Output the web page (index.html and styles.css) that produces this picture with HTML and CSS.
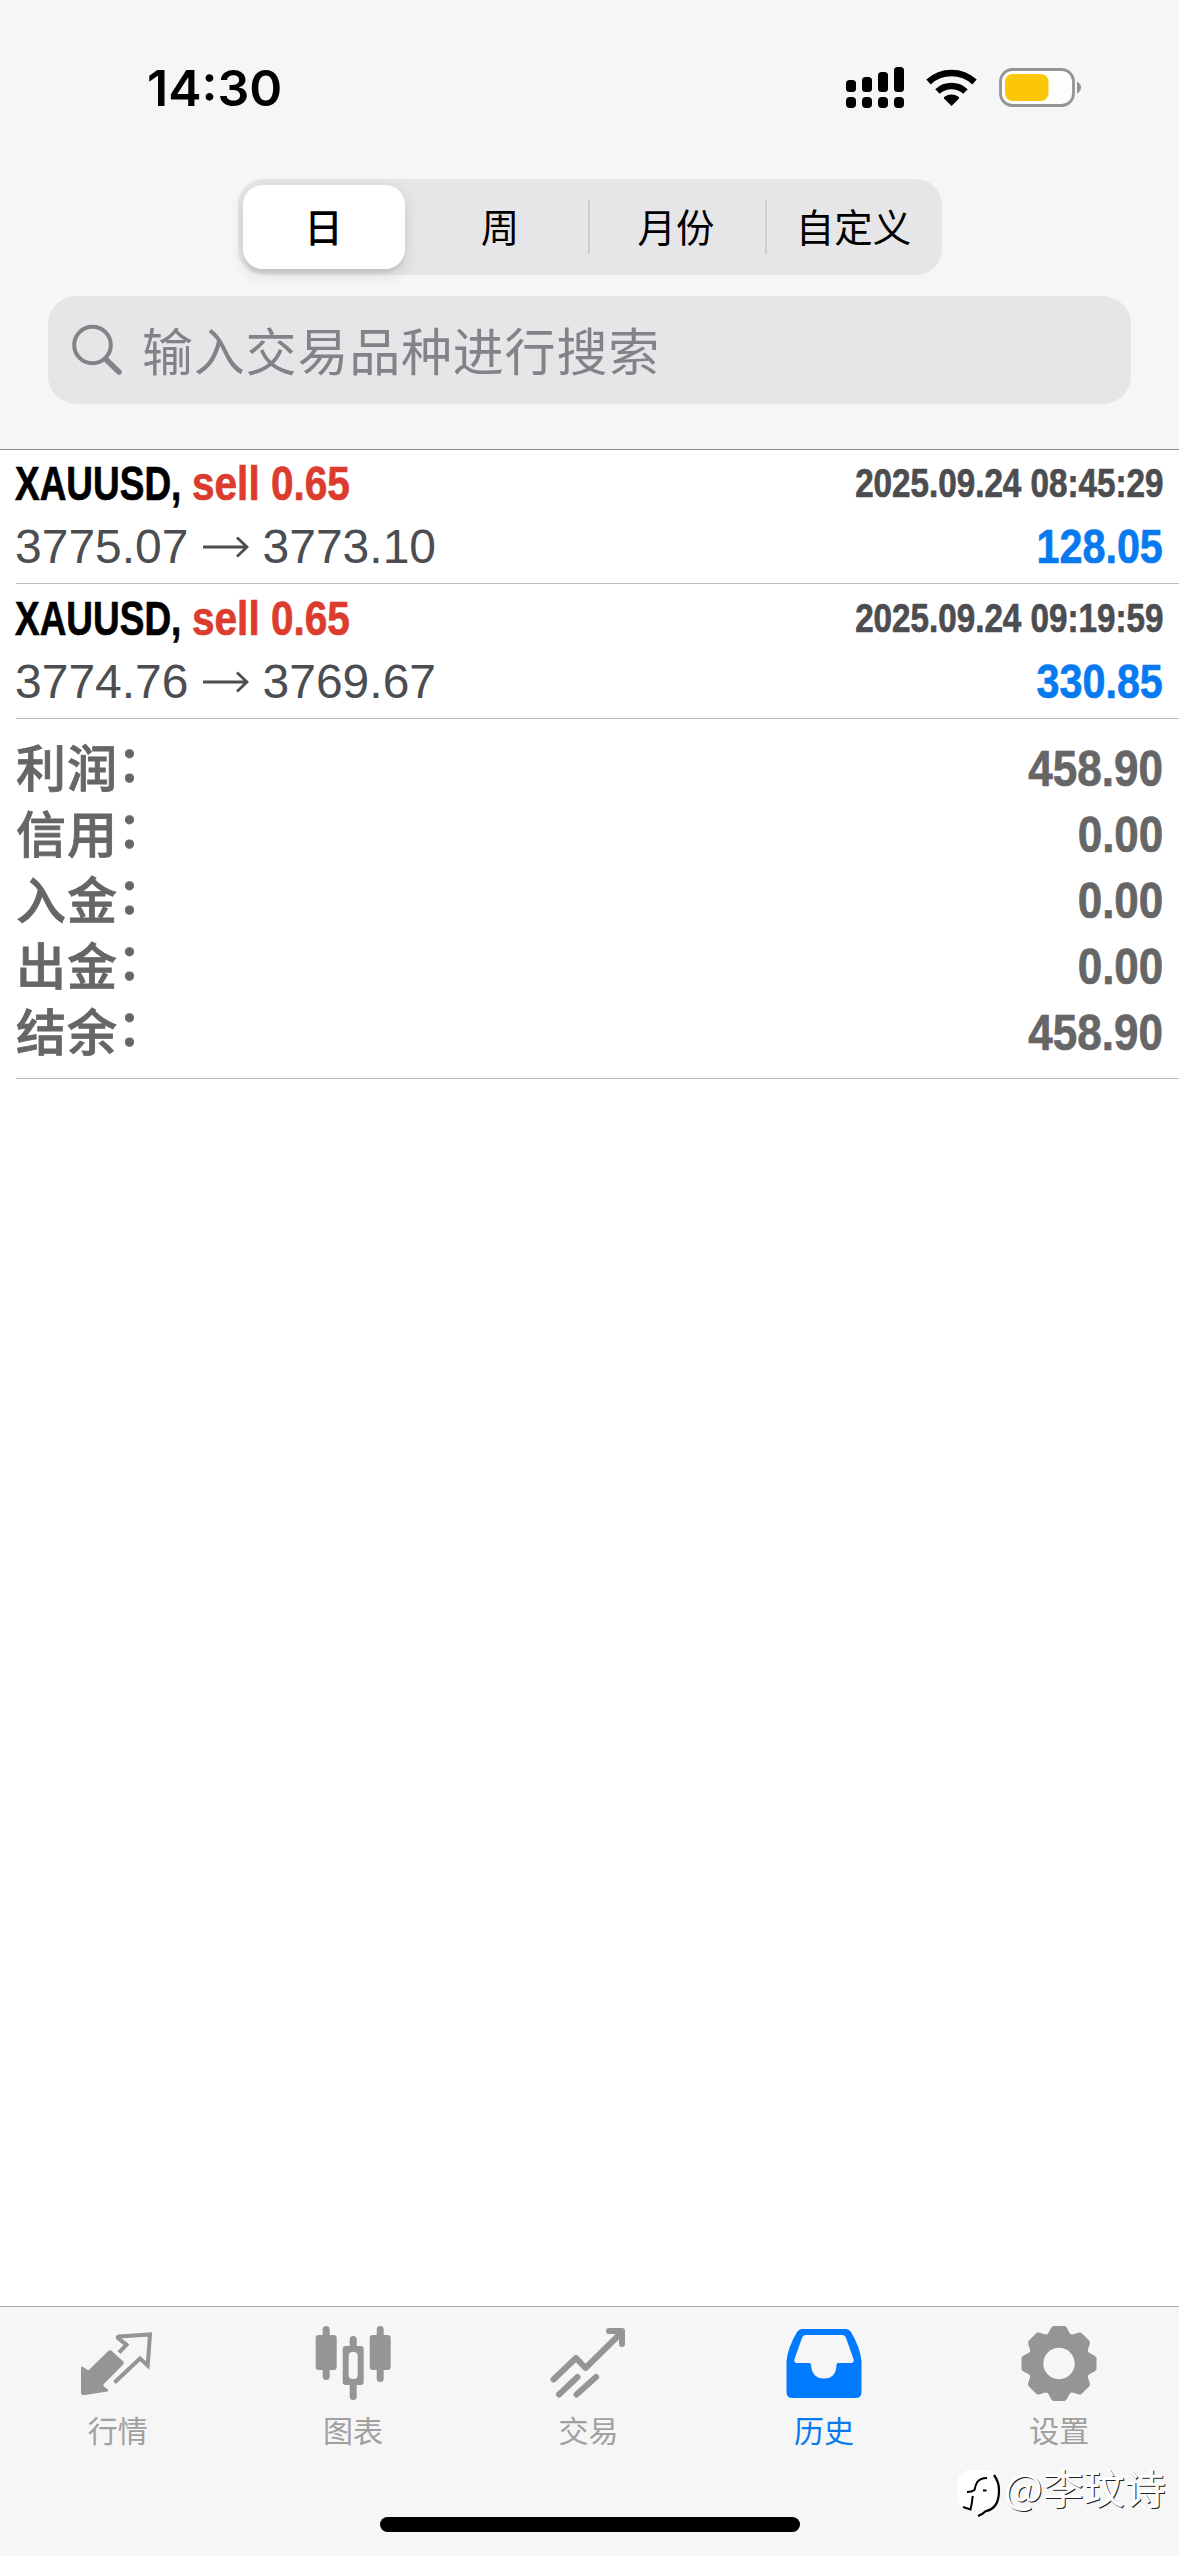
FILE: index.html
```html
<!DOCTYPE html>
<html lang="zh-CN">
<head>
<meta charset="utf-8">
<title>历史</title>
<link rel="stylesheet" href="styles.css">
</head>
<body>
<div class="app">
  <header class="top">
    <div class="status">
      <span class="clock">14:30</span>
      <svg class="status-icons" width="242" height="44" viewBox="0 0 242 44">
        <g fill="#000">
          <rect x="0" y="14" width="10" height="12" rx="3.5"/><rect x="16" y="11" width="10" height="15" rx="3.5"/><rect x="32" y="6" width="10" height="20" rx="3.5"/><rect x="48" y="1" width="10" height="25" rx="3.5"/>
          <rect x="0" y="31" width="10" height="11" rx="4"/><rect x="16" y="31" width="10" height="11" rx="4"/><rect x="32" y="31" width="10" height="11" rx="4"/><rect x="48" y="31" width="10" height="11" rx="4"/>
          <path d="M105.5 40 L98 32.5 Q97.500 31.500 98.500 30.800 A12 12 0 0 1 112.500 30.800 Q113.500 31.500 113 32.500Z"/>
        </g>
        <path d="M91.500 25.500A20.500 20.500 0 0 1 119.500 25.500M82.500 16A34 34 0 0 1 128.500 16" fill="none" stroke="#000" stroke-width="6.500"/>
        <rect x="154.500" y="3.500" width="73" height="36" rx="12" fill="#fdfdfb" stroke="#949494" stroke-width="2.800"/>
        <rect x="159" y="8" width="43.500" height="27" rx="7.500" fill="#fbc707"/>
        <path d="M231 15.500Q235 17.500 235 21.500Q235 25.500 231 27.500Z" fill="#949494"/>
      </svg>
    </div>
    <nav class="segments">
      <span class="segment selected">日</span>
      <span class="segment week">周</span>
      <span class="segment divided">月份</span>
      <span class="segment divided custom">自定义</span>
    </nav>
    <div class="search">
      <svg width="54" height="54" viewBox="0 0 54 54" fill="none" stroke="#838387" stroke-width="4"><circle cx="21.500" cy="22" r="18.300"/><path d="M34.500 36L48 49" stroke-width="5.500" stroke-linecap="round"/></svg>
      <span class="placeholder">输入交易品种进行搜索</span>
    </div>
  </header>
  <main class="history">
    <section class="deal">
      <div class="line"><span class="symbol"><b>XAUUSD,</b></span><b class="side">sell 0.65</b><b class="date">2025.09.24 08:45:29</b></div>
      <div class="line prices"><span>3775.07</span><svg class="arrow" width="46" height="22" viewBox="0 0 46 22"><path d="M0 11H44M34 1.500L44 11L34 20.500" fill="none" stroke="#4c4d50" stroke-width="2.800"/></svg><span>3773.10</span><b class="profit">128.05</b></div>
    </section>
    <section class="deal">
      <div class="line"><span class="symbol"><b>XAUUSD,</b></span><b class="side">sell 0.65</b><b class="date">2025.09.24 09:19:59</b></div>
      <div class="line prices"><span>3774.76</span><svg class="arrow" width="46" height="22" viewBox="0 0 46 22"><path d="M0 11H44M34 1.500L44 11L34 20.500" fill="none" stroke="#4c4d50" stroke-width="2.800"/></svg><span>3769.67</span><b class="profit">330.85</b></div>
    </section>
    <section class="summary">
      <div class="total"><span class="label">利润<i>：</i></span><b>458.90</b></div>
      <div class="total"><span class="label">信用<i>：</i></span><b>0.00</b></div>
      <div class="total"><span class="label">入金<i>：</i></span><b>0.00</b></div>
      <div class="total"><span class="label">出金<i>：</i></span><b>0.00</b></div>
      <div class="total"><span class="label">结余<i>：</i></span><b>458.90</b></div>
    </section>
  </main>
  <footer class="tabs">
    <a class="tab"><svg width="80" height="80" viewBox="0 0 80 80">
      <path d="M3 46Q3 43.500 5 45L10.300 48.500L30.500 28.800Q32 27.500 33.500 28.800L45.300 39.500Q46.500 41 45.300 42.500L25.300 62.500Q25 64.500 29.500 67Q31 68.500 29.500 69.500L7 73Q3 73.500 3 70.500Z" fill="#959595"/>
      <path d="M41 30.500L48.500 22.800L40 16.200Q39 14.800 41 14.500L72 12.500L69.700 43.500L62 36.500L36.500 60.500" fill="none" stroke="#959595" stroke-width="4"/>
    </svg><span>行情</span></a>
    <a class="tab"><svg width="80" height="80" viewBox="0 0 80 80" fill="#959595">
      <rect x="9.700" y="4" width="7" height="54" rx="3.500"/><rect x="2.700" y="13" width="21" height="35" rx="3"/>
      <rect x="63.700" y="4" width="7" height="56" rx="3.500"/><rect x="56.700" y="13" width="21" height="35" rx="3"/>
      <rect x="36.700" y="14" width="7" height="64" rx="3.500"/><rect x="29.700" y="24" width="21" height="39" rx="3"/><rect x="35.700" y="30" width="9" height="27" rx="4" fill="#f6f6f6"/>
    </svg><span>图表</span></a>
    <a class="tab"><svg width="80" height="80" viewBox="0 0 80 80" fill="none" stroke="#959595" stroke-width="6" stroke-linecap="round" stroke-linejoin="round">
      <path d="M5.500 57.500L28 36L37.500 46L73 11M61 9H74V22" />
      <path d="M11 72.500L29.500 55M28.500 72.500L48 55" />
    </svg><span>交易</span></a>
    <a class="tab active"><svg width="80" height="80" viewBox="0 0 80 80">
      <path fill-rule="evenodd" fill="#007aff" d="M18 7H62Q65 7 67 10Q76 25 77.500 39V70Q77.500 76 71.500 76H8.500Q2.500 76 2.500 70V39Q4 25 13 10Q15 7 18 7ZM22 13Q19 13 18 16L10.500 37Q9.500 41 13 41H25.500Q27 41 27 43Q28 56.500 40 56.500Q52 56.500 52.500 43Q52.500 41 54 41H67Q70.500 41 69.500 37L62 16Q61 13 58 13Z"/>
    </svg><span>历史</span></a>
    <a class="tab"><svg width="80" height="80" viewBox="0 0 80 80">
      <g fill="#959595"><circle cx="40" cy="41.500" r="29"/>
        <path id="tooth" d="M34 4H46Q48 5 49.500 9Q51 13 55 14V69Q51 70 49.500 74Q48 78 46 79H34Q32 78 30.500 74Q29 70 25 69V14Q29 13 30.500 9Q32 5 34 4Z"/>
        <use href="#tooth" transform="rotate(45 40 41.500)"/><use href="#tooth" transform="rotate(90 40 41.500)"/><use href="#tooth" transform="rotate(135 40 41.500)"/></g>
      <circle cx="40" cy="41.500" r="15.700" fill="#f6f6f6"/>
    </svg><span>设置</span></a>
    <div class="home-indicator"></div>
    <div class="watermark">
      <svg width="44" height="50" viewBox="0 0 44 50">
        <rect x="0" y="0" width="40" height="40" rx="12" fill="#fff"/>
        <path d="M36 5Q41 12 41 20Q41 30 37.500 35Q34 40 28 41Q25 44 20 46" fill="none" stroke="#000" stroke-width="2.200"/>
        <path d="M29 8Q22 8 19 12.500Q17.500 15 16.500 20Q14 22 9 22M14.700 26Q14 34 12.500 39.500L5 37" fill="none" stroke="#000" stroke-width="2"/>
        <path d="M25 19.500h3.500v2h-3.500z" fill="#000"/>
      </svg>
      <span>@李玟诗</span>
    </div>
  </footer>
</div>
</body>
</html>
```
FILE: styles.css
```css
* { box-sizing: border-box; }
body { margin: 0; background: #fff; }
.app {
  width: 1179px; height: 2556px;
  display: flex; flex-direction: column;
  font-family: "Liberation Sans", "Noto Sans CJK SC", sans-serif;
  overflow: hidden;
}
.top {
  height: 450px; flex: none;
  background: #f6f6f6; border-bottom: 1px solid #8e8e8e;
  display: flex; flex-direction: column; align-items: center;
}
.status {
  width: 100%; height: 179px; padding: 66px 91px 0 147px;
  display: flex; justify-content: space-between; align-items: flex-start;
}
.clock { font: 600 50px/44px Inter, sans-serif; color: #000; }
.segments {
  width: 704px; height: 96px; padding: 6px 5px;
  display: grid; grid-template-columns: 162px 183px 177px 172px;
  background: #e6e6e8; border-radius: 26px;
}
.segment {
  display: flex; align-items: center; justify-content: center;
  padding-bottom: 4px;
  font: 400 38.500px/60px "Noto Sans CJK SC", sans-serif; color: #000;
  position: relative;
}
.week { padding-left: 8px; }
.custom { padding-left: 6px; }
.selected {
  background: #fff; border-radius: 20px; font-weight: 500;
  box-shadow: 0 5px 16px rgba(0,0,0,.13), 0 4px 2px rgba(0,0,0,.06);
}
.divided::before { content: ""; position: absolute; left: 0; top: 15px; width: 2px; height: 54px; background: #cecfd2; }
.search {
  width: 1083px; height: 108px; margin-top: 21px; padding-left: 23px;
  display: flex; align-items: center; gap: 17px;
  background: #e6e6e8; border-radius: 28px;
}
.placeholder { padding-bottom: 3px; font: 400 51px/80px "Noto Sans CJK SC", sans-serif; letter-spacing: .8px; color: #838387; }
.history { flex: 1; padding-left: 16px; }
.deal { height: 135px; padding: 3px 16px 0 0; border-bottom: 1px solid #bcbcbe; }
.deal:first-child { height: 134px; padding-top: 2px; }
.line { height: 63px; margin-left: -1px; display: flex; align-items: center; font-size: 48px; white-space: nowrap; }
.line b { display: inline-block; -webkit-text-stroke: .7px currentColor; }
.symbol { width: 177px; overflow: visible; }
.symbol b { transform: scaleX(.77); transform-origin: left; }
.side { color: #dc3c2d; transform: scaleX(.845); transform-origin: left; }
.date { margin-left: auto; font-size: 40px; color: #4c4d50; transform: scaleX(.83); transform-origin: right; }
.prices { color: #4c4d50; }
.arrow { margin: 0 14px; }
.profit { margin-left: auto; color: #087af0; transform: scaleX(.86); transform-origin: right; }
.summary { padding: 16px 16px 13px 0; border-bottom: 1px solid #bcbcbe; color: #666; height: 360px; }
.total { height: 66px; display: flex; justify-content: space-between; align-items: center; font-size: 50px; line-height: 66px; }
.total b { padding-top: 1px; transform: scaleX(.88); transform-origin: right; -webkit-text-stroke: .7px currentColor; }
.label { padding-bottom: 6px; font-family: "Noto Sans CJK SC", sans-serif; font-weight: 500; letter-spacing: 1px; -webkit-text-stroke: .8px currentColor; }
.label i { font-style: normal; position: relative; top: -5px; left: -1px; }
.tabs {
  position: relative; height: 250px; flex: none; padding-right: 2px;
  display: grid; grid-template-columns: repeat(5, 1fr);
  background: #f6f6f6; border-top: 1px solid #acacac;
}
.tab { display: flex; flex-direction: column; align-items: center; padding-top: 15px; color: #a0a0a0; font: 400 30px/44px "Noto Sans CJK SC", sans-serif; }
.tab svg { margin-bottom: 5px; }
.active { color: #087af0; }
.home-indicator { position: absolute; left: 380px; top: 210px; width: 420px; height: 15px; border-radius: 8px; background: #000; }
.watermark {
  position: absolute; left: 958px; top: 163px; display: flex; align-items: flex-start; gap: 2px;
  color: #fff; font: 400 41px/44px "Noto Sans CJK SC", sans-serif; text-shadow: 1px 1px 0 #222;
}
.watermark span { margin-top: -6px; }
```
